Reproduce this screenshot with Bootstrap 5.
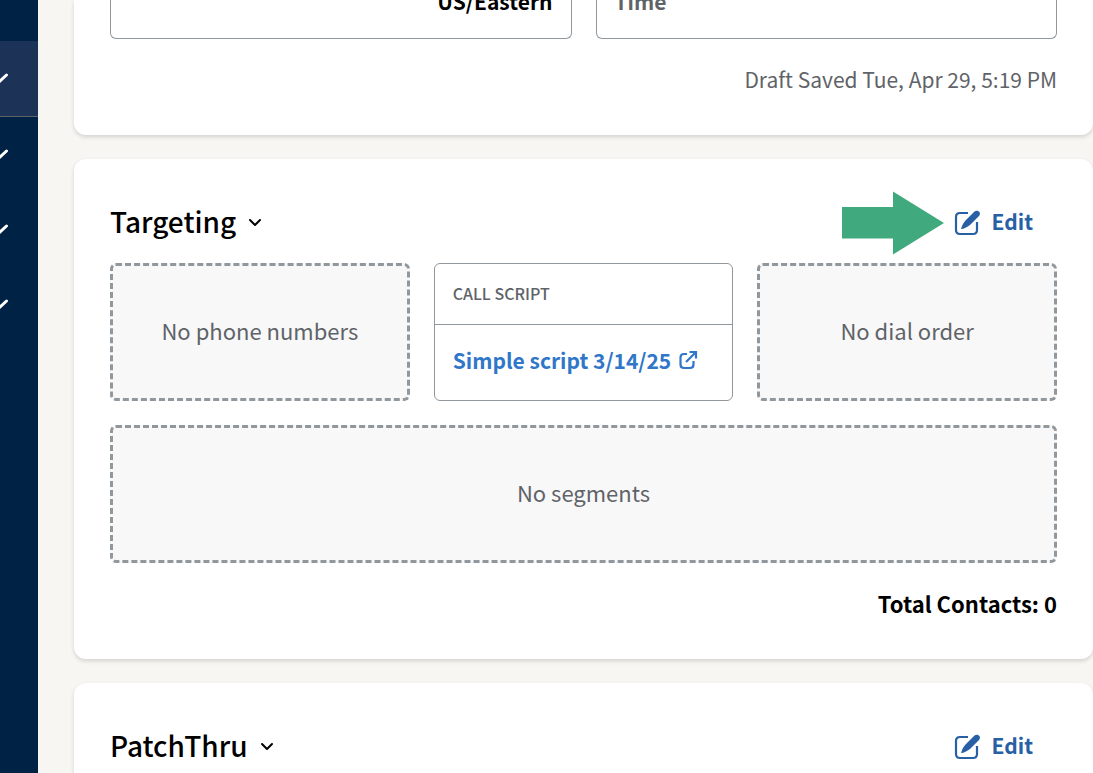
<!DOCTYPE html>
<html lang="en">
<head>
<meta charset="utf-8">
<meta name="viewport" content="width=device-width, initial-scale=1">
<title>Campaign review</title>
<link href="https://cdn.jsdelivr.net/npm/bootstrap@5.3.0/dist/css/bootstrap.min.css" rel="stylesheet">
<style>
  body { background: #f8f6f2; color: #000; font-family: "Noto Sans CJK SC", sans-serif; font-size: 22px; line-height: 30px; }
  .app { height: 100vh; overflow: hidden; }
  .side { width: 38px; background: #002244; padding-top: 41px; }
  .side button { width: 100%; height: 75px; border: 0; background: none; color: #fff; }
  .side button.current { height: 76px; background: #1c3257; border-bottom: 1px solid #5f6368; }
  .content { padding-left: 36px; }
  .panel { background: #fff; border-radius: 12px; padding: 32px 36px; box-shadow: 0 2px 4px rgba(0, 0, 0, .15); }
  .panel-first { border-radius: 0 0 12px 12px; padding-top: 0; padding-bottom: 41px; }
  .panel-target { padding-bottom: 38px; }
  .field { height: 39px; border: 1px solid #90979d; border-top: 0; border-radius: 0 0 6px 6px; padding: 0 18px 22px; font-size: 21px; font-weight: 700; }
  .soft { color: #5f6368; }
  .saved { margin-top: 25px; font-size: 21px; }
  .head { height: 64px; }
  .head h2 { font-size: 28px; line-height: 40px; font-weight: 500; padding-bottom: 5px; }
  .edit { border: 0; background: none; color: #2860a5; font-size: 21px; font-weight: 700; padding: 0 24px 0 0; }
  .edit span { padding-bottom: 4px; }
  .tile { min-height: 138px; border-radius: 6px; }
  .tile-empty { background: #f8f8f8; border: 3px dashed #90979d; color: #5f6368; padding-bottom: 5px; }
  .tile-script { border: 1px solid #90979d; }
  .tile-script h3 { height: 61px; font-size: 16px; font-weight: 500; color: #5f6368; padding: 0 18px; border-bottom: 1px solid #90979d; }
  .tile-script a { color: #3076c9; font-size: 21px; font-weight: 700; padding: 20px 18px 0; white-space: nowrap; }
  .total { margin-top: 22px; line-height: 36px; font-weight: 700; }
</style>
</head>
<body>
<div class="app d-flex">
  <nav class="side flex-shrink-0" aria-label="Main">
    <button class="current d-flex align-items-center p-0" aria-label="Expand section 1"><svg width="9" height="14" viewBox="0 0 9 14" fill="none" stroke="currentColor" stroke-width="3" stroke-linecap="round"><path d="M-8 3L-1 10L6.500 3"/></svg></button>
    <button class="d-flex align-items-center p-0" aria-label="Expand section 2"><svg width="9" height="14" viewBox="0 0 9 14" fill="none" stroke="currentColor" stroke-width="3" stroke-linecap="round"><path d="M-8 3L-1 10L6.500 3"/></svg></button>
    <button class="d-flex align-items-center p-0" aria-label="Expand section 3"><svg width="9" height="14" viewBox="0 0 9 14" fill="none" stroke="currentColor" stroke-width="3" stroke-linecap="round"><path d="M-8 3L-1 10L6.500 3"/></svg></button>
    <button class="d-flex align-items-center p-0" aria-label="Expand section 4"><svg width="9" height="14" viewBox="0 0 9 14" fill="none" stroke="currentColor" stroke-width="3" stroke-linecap="round"><path d="M-8 3L-1 10L6.500 3"/></svg></button>
  </nav>
  <main class="content flex-grow-1 d-flex flex-column gap-4">
    <section class="panel panel-first">
      <div class="row gx-4">
        <div class="col-6"><div class="field d-flex align-items-end justify-content-end"><span>US/Eastern</span></div></div>
        <div class="col-6"><div class="field soft d-flex align-items-end"><span>Time</span></div></div>
      </div>
      <p class="saved soft text-end mb-0">Draft Saved Tue, Apr 29, 5:19 PM</p>
    </section>

    <section class="panel panel-target">
      <div class="head d-flex align-items-center mb-2">
        <h2 class="mb-0">Targeting</h2>
        <svg class="ms-2" width="22" height="22" viewBox="0 0 22 22" fill="none" stroke="#000" stroke-width="2" stroke-linecap="round" stroke-linejoin="round"><path d="M6 8L11 13L16 8"/></svg>
        <svg class="ms-auto" width="102" height="64" viewBox="0 0 102 64" fill="#40aa7e"><path d="M0 16H51V0.500L102 32L51 63.500V47.500H0Z"/></svg>
        <button class="edit d-flex align-items-center gap-2 ms-2"><svg width="32" height="32" viewBox="0 0 32 32"><path d="M16 6H8Q4 6 4 10V23Q4 27 8 27H21Q25 27 25 23V15" fill="none" stroke="currentColor" stroke-width="2.200"/><path d="M9 22C10 18 12 15 14 13L22 5C25 2 30 5 27 9L18 18C15 20 12 22 9 22Z" fill="currentColor"/></svg><span>Edit</span></button>
      </div>
      <div class="row g-4">
        <div class="col-4"><div class="tile tile-empty d-flex align-items-center justify-content-center">No phone numbers</div></div>
        <div class="col-4"><div class="tile tile-script d-flex flex-column">
          <h3 class="d-flex align-items-center mb-0">CALL SCRIPT</h3>
          <a href="#" class="d-flex align-items-center text-decoration-none gap-2"><span>Simple script 3/14/25</span><svg width="19" height="22" viewBox="0 0 19 22" fill="none" stroke="currentColor" stroke-width="2.200"><path d="M8 5H5Q1.500 5 1.500 8.500V15.500Q1.500 19 5 19H11Q14.500 19 14.500 15.500V12M7 13L17 3M10.500 3H17V9.500"/></svg></a>
        </div></div>
        <div class="col-4"><div class="tile tile-empty d-flex align-items-center justify-content-center">No dial order</div></div>
        <div class="col-12"><div class="tile tile-empty d-flex align-items-center justify-content-center">No segments</div></div>
      </div>
      <p class="total text-end mb-0">Total Contacts: 0</p>
    </section>

    <section class="panel">
      <div class="head d-flex align-items-center mb-2">
        <h2 class="mb-0">PatchThru</h2>
        <svg class="ms-2" width="22" height="22" viewBox="0 0 22 22" fill="none" stroke="#000" stroke-width="2" stroke-linecap="round" stroke-linejoin="round"><path d="M6 8L11 13L16 8"/></svg>
        <button class="edit d-flex align-items-center gap-2 ms-auto"><svg width="32" height="32" viewBox="0 0 32 32"><path d="M16 6H8Q4 6 4 10V23Q4 27 8 27H21Q25 27 25 23V15" fill="none" stroke="currentColor" stroke-width="2.200"/><path d="M9 22C10 18 12 15 14 13L22 5C25 2 30 5 27 9L18 18C15 20 12 22 9 22Z" fill="currentColor"/></svg><span>Edit</span></button>
      </div>
    </section>
  </main>
</div>
<script src="https://cdn.jsdelivr.net/npm/bootstrap@5.3.0/dist/js/bootstrap.bundle.min.js"></script>
</body>
</html>
